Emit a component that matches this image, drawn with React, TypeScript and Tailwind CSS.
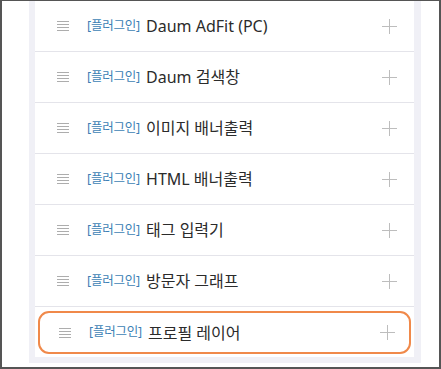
import React from "react";

const items = [
  "Daum AdFit (PC)",
  "Daum 검색창",
  "이미지 배너출력",
  "HTML 배너출력",
  "태그 입력기",
  "방문자 그래프",
  "프로필 레이어",
];

const DragHandle = () => (
  <svg width="12" height="10" viewBox="0 0 12 10" className="shrink-0">
    {[0.5, 3.5, 6.5, 9.5].map((y) => (
      <line key={y} x1="0" y1={y} x2="12" y2={y} stroke="#adadad" strokeWidth="1" />
    ))}
  </svg>
);

const PlusIcon = () => (
  <svg width="15" height="15" viewBox="0 0 15 15" className="shrink-0">
    <line x1="0" y1="7.5" x2="15" y2="7.5" stroke="#bdbdbd" strokeWidth="1" />
    <line x1="7.5" y1="0" x2="7.5" y2="15" stroke="#bdbdbd" strokeWidth="1" />
  </svg>
);

export default function App() {
  return (
    <div
      className="w-[441px] h-[369px] bg-white border-t border-l-2 border-r-2 border-b-2 border-[#555555] pl-[27px] overflow-hidden"
      style={{ fontFamily: '"Noto Sans", "Noto Sans CJK KR", sans-serif' }}
    >
      <div className="w-[392px] h-[362px] bg-[#f0f0f6] pl-[6px] pr-[7px] pb-[6px]">
        <ul className="bg-white h-full">
          {items.map((name, i) => {
            const last = i === items.length - 1;
            return (
              <li
                key={name}
                className={
                  last
                    ? "h-[51px] px-[3px] py-[4px]"
                    : "h-[51px] border-b border-[#e4e4ea]"
                }
              >
                <div
                  className={
                    last
                      ? "h-full flex items-center pl-[19px] pr-[14px] border-2 border-[#f0894a] rounded-[11px]"
                      : "h-full flex items-center pl-[22px] pr-[17px]"
                  }
                >
                  <DragHandle />
                  <span className="ml-[18px] text-[12.5px] text-[#3d7fb5] tracking-[-0.2px]">[플러그인]</span>
                  <span className="ml-[6px] text-[16px] text-[#2b2b2b] flex-1">{name}</span>
                  <PlusIcon />
                </div>
              </li>
            );
          })}
        </ul>
      </div>
    </div>
  );
}
